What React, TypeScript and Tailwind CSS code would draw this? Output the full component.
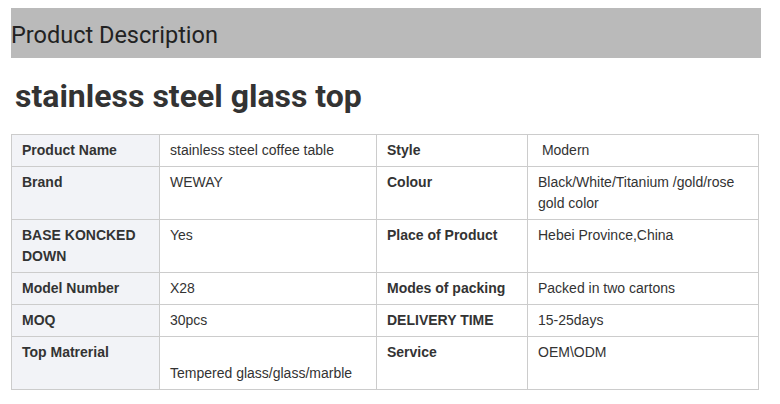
const rows: [string, string, string, string][] = [
  ["Product Name", "stainless steel coffee table", "Style", "\u00a0Modern"],
  ["Brand", "WEWAY", "Colour", "Black/White/Titanium /gold/rose gold color"],
  ["BASE KONCKED DOWN", "Yes", "Place of Product", "Hebei Province,China"],
  ["Model Number", "X28", "Modes of packing", "Packed in two cartons"],
  ["MOQ", "30pcs", "DELIVERY TIME", "15-25days"],
  ["Top Matrerial", "\nTempered glass/glass/marble", "Service", "OEM\\ODM"],
];

export default function App() {
  return (
    <div className="min-h-[404px] w-[780px] bg-white pl-[11px] pt-[8px]">
      <div className="flex h-[50px] w-[750px] items-center bg-[#bababa] pt-[5px] font-['Roboto',sans-serif] text-[23.5px] text-[#222]">
        Product Description
      </div>
      <h1 className="mt-[18px] mb-[17px] pl-[4px] font-['Roboto',sans-serif] text-[32px] leading-[41px] font-bold text-[#333]">
        stainless steel glass top
      </h1>
      <table className="w-[747px] table-fixed border-collapse font-['Liberation_Sans',Arial,sans-serif] text-[14px] leading-[21px] text-[#333]">
        <colgroup>
          <col className="w-[148px]" />
          <col className="w-[217px]" />
          <col className="w-[151px]" />
          <col className="w-[231px]" />
        </colgroup>
        <tbody>
          {rows.map((r) => (
            <tr key={r[0]}>
              <td className="border border-[#cccccc] bg-[#f2f3f7] px-[10px] py-[5px] align-top font-bold">
                {r[0]}
              </td>
              <td className="border border-[#cccccc] px-[10px] py-[5px] align-top whitespace-pre-line">
                {r[1]}
              </td>
              <td className="border border-[#cccccc] px-[10px] py-[5px] align-top font-bold">
                {r[2]}
              </td>
              <td className="border border-[#cccccc] px-[10px] py-[5px] align-top">
                {r[3]}
              </td>
            </tr>
          ))}
        </tbody>
      </table>
    </div>
  );
}
